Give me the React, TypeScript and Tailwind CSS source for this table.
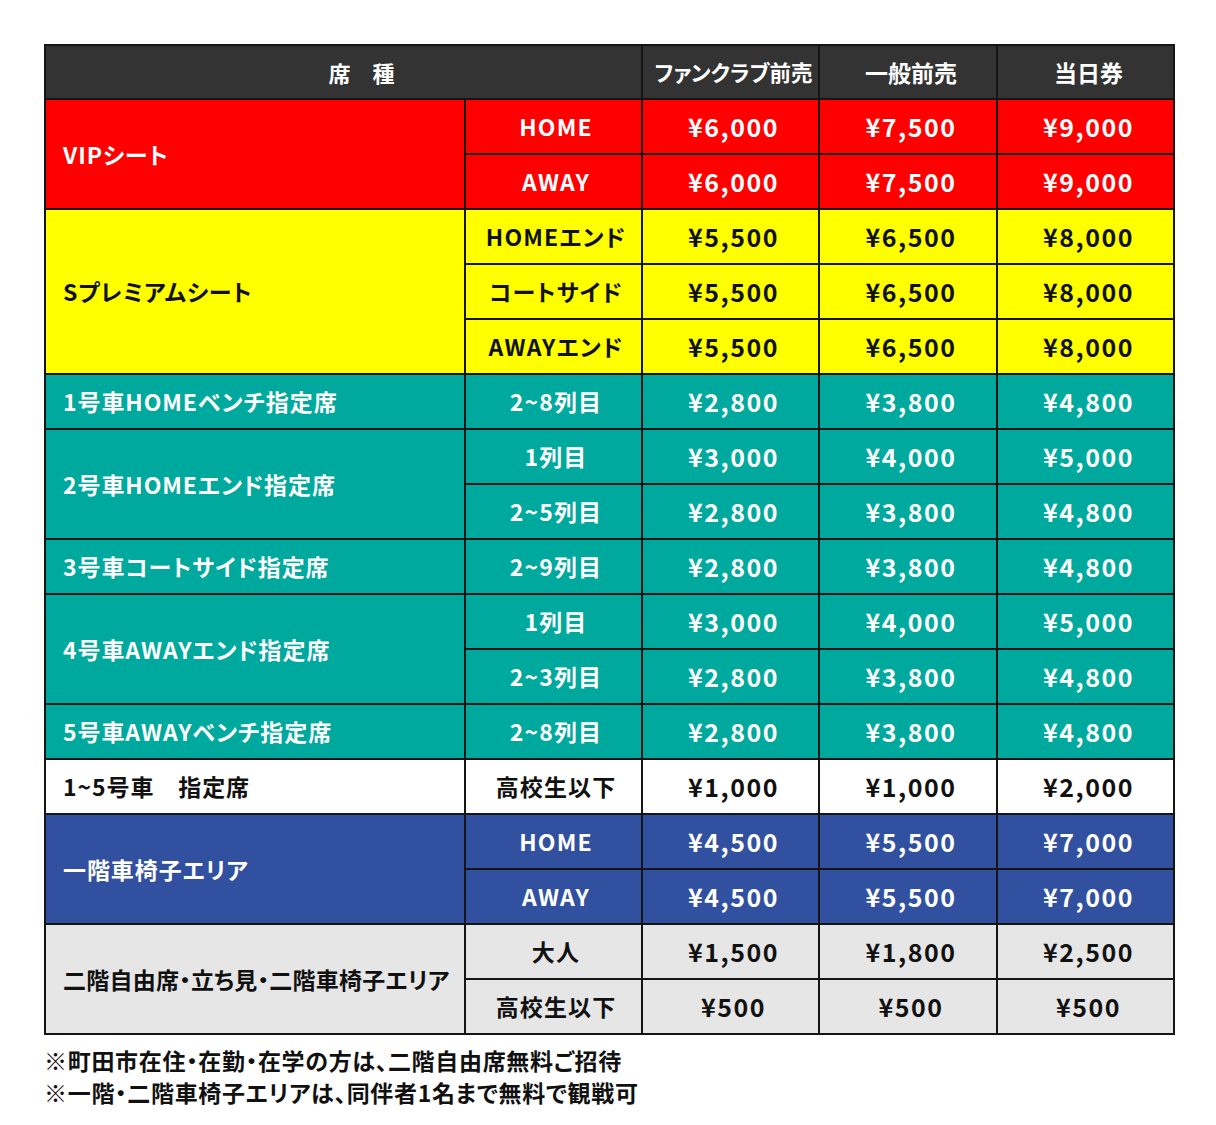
const C = {
  head: 'bg-[#333333] text-white',
  red: 'bg-[#ff0000] text-white',
  yellow: 'bg-[#ffff00] text-[#111111]',
  teal: 'bg-[#00a99d] text-white',
  white: 'bg-white text-[#111111]',
  blue: 'bg-[#3151a0] text-white',
  gray: 'bg-[#e6e6e6] text-[#111111]',
};

type Sub = { label: string; prices: [string, string, string] };
type Group = { name: string; color: string; subs: Sub[]; tight?: boolean };

const groups: Group[] = [
  {
    name: 'VIPシート',
    color: C.red,
    subs: [
      { label: 'HOME', prices: ['¥6,000', '¥7,500', '¥9,000'] },
      { label: 'AWAY', prices: ['¥6,000', '¥7,500', '¥9,000'] },
    ],
  },
  {
    name: 'Sプレミアムシート',
    color: C.yellow,
    subs: [
      { label: 'HOMEエンド', prices: ['¥5,500', '¥6,500', '¥8,000'] },
      { label: 'コートサイド', prices: ['¥5,500', '¥6,500', '¥8,000'] },
      { label: 'AWAYエンド', prices: ['¥5,500', '¥6,500', '¥8,000'] },
    ],
  },
  {
    name: '1号車HOMEベンチ指定席',
    color: C.teal,
    subs: [{ label: '2~8列目', prices: ['¥2,800', '¥3,800', '¥4,800'] }],
  },
  {
    name: '2号車HOMEエンド指定席',
    color: C.teal,
    subs: [
      { label: '1列目', prices: ['¥3,000', '¥4,000', '¥5,000'] },
      { label: '2~5列目', prices: ['¥2,800', '¥3,800', '¥4,800'] },
    ],
  },
  {
    name: '3号車コートサイド指定席',
    color: C.teal,
    subs: [{ label: '2~9列目', prices: ['¥2,800', '¥3,800', '¥4,800'] }],
  },
  {
    name: '4号車AWAYエンド指定席',
    color: C.teal,
    subs: [
      { label: '1列目', prices: ['¥3,000', '¥4,000', '¥5,000'] },
      { label: '2~3列目', prices: ['¥2,800', '¥3,800', '¥4,800'] },
    ],
  },
  {
    name: '5号車AWAYベンチ指定席',
    color: C.teal,
    subs: [{ label: '2~8列目', prices: ['¥2,800', '¥3,800', '¥4,800'] }],
  },
  {
    name: '1~5号車　指定席',
    color: C.white,
    subs: [{ label: '高校生以下', prices: ['¥1,000', '¥1,000', '¥2,000'] }],
  },
  {
    name: '一階車椅子エリア',
    color: C.blue,
    subs: [
      { label: 'HOME', prices: ['¥4,500', '¥5,500', '¥7,000'] },
      { label: 'AWAY', prices: ['¥4,500', '¥5,500', '¥7,000'] },
    ],
  },
  {
    name: '二階自由席・立ち見・二階車椅子エリア',
    color: C.gray,
    tight: true,
    subs: [
      { label: '大人', prices: ['¥1,500', '¥1,800', '¥2,500'] },
      { label: '高校生以下', prices: ['¥500', '¥500', '¥500'] },
    ],
  },
];

const cell = 'border-2 border-[#151515] text-center align-middle';

export default function App() {
  return (
    <div className="min-h-[1125px] w-[1216px] bg-white pl-[44px] pt-[44px] font-bold [font-family:'Noto_Sans_CJK_JP','Noto_Sans',sans-serif] [font-feature-settings:'palt']">
      <table className="w-[1129px] table-fixed border-collapse">
        <colgroup>
          <col className="w-[420px]" />
          <col className="w-[177px]" />
          <col className="w-[177px]" />
          <col className="w-[178px]" />
          <col className="w-[177px]" />
        </colgroup>
        <thead>
          <tr className={`h-[54px] ${C.head}`}>
            <th colSpan={2} className={`${cell} pl-[36px] text-[22px]`}>
              席　種
            </th>
            <th className={`${cell} pl-[6px] text-[21.5px]`}>ファンクラブ前売</th>
            <th className={`${cell} pl-[6px] text-[23px]`}>一般前売</th>
            <th className={`${cell} pl-[6px] text-[23px]`}>当日券</th>
          </tr>
        </thead>
        <tbody>
          {groups.map((g) =>
            g.subs.map((s, i) => (
              <tr key={g.name + s.label + i} className={`h-[55px] ${g.color}`}>
                {i === 0 && (
                  <td
                    rowSpan={g.subs.length}
                    className={`border-2 border-[#151515] pl-[17px] text-left align-middle text-[23px] ${
                      g.tight ? 'tracking-[0.01em]' : 'tracking-[0.04em]'
                    }`}
                  >
                    {g.name}
                  </td>
                )}
                <td className={`${cell} pl-[5px] text-[23px] tracking-[0.05em]`}>{s.label}</td>
                {s.prices.map((p, j) => (
                  <td key={j} className={`${cell} pl-[6px] text-[25px] tracking-[0.06em]`}>
                    {p}
                  </td>
                ))}
              </tr>
            ))
          )}
        </tbody>
      </table>

      <div className="mt-[9px] text-[23px] leading-[32px] tracking-[0.03em] text-[#111111]">
        <p>※町田市在住・在勤・在学の方は、二階自由席無料ご招待</p>
        <p>※一階・二階車椅子エリアは、同伴者1名まで無料で観戦可</p>
      </div>
    </div>
  );
}
